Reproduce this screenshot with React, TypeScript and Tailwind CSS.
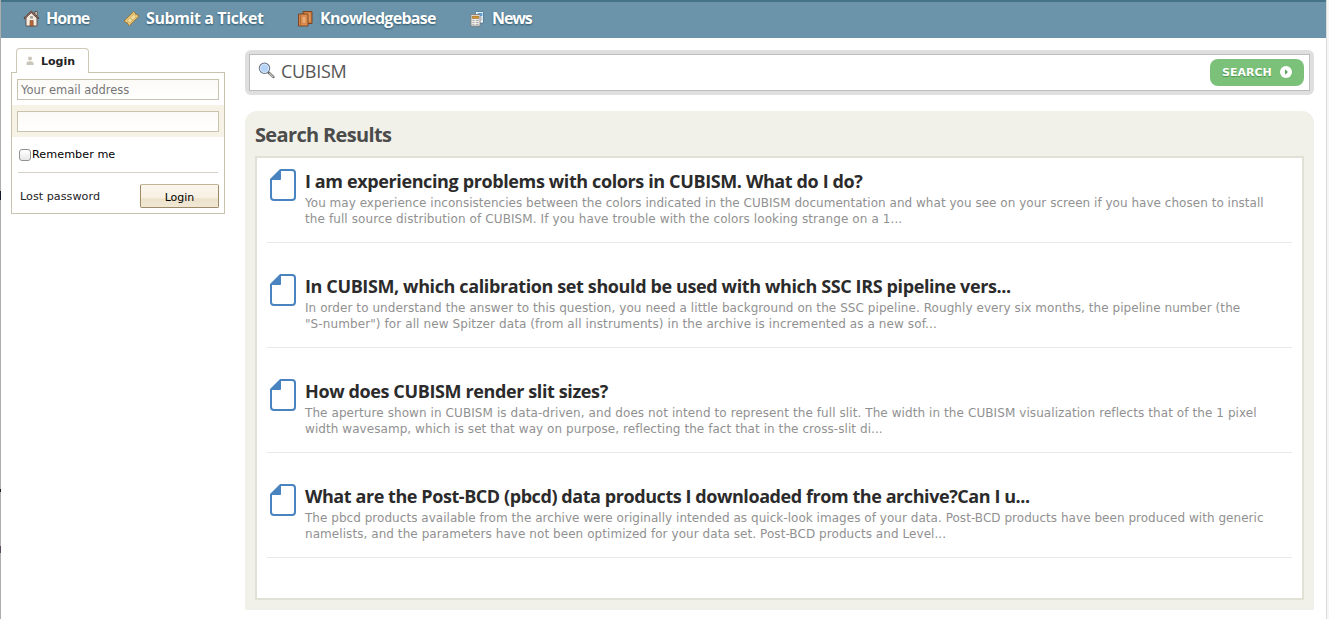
import type { ReactNode } from "react";

function HouseIcon() {
  return (
    <svg width="17" height="17" viewBox="0 0 17 17">
      <path d="M12 1.5h2.2v4H12z" fill="#e9dccb" stroke="#4a3328" strokeWidth=".7" />
      <path d="M3 7.5 8.2 2.6 14 8v8H3z" fill="#f6ecdf" stroke="#5b4a42" strokeWidth=".9" />
      <path d="M1 8.6 8.3 1.6l7.5 7" fill="none" stroke="#5b4036" strokeWidth="1.500" />
      <path d="M2 7.6 8.3 1.8l6.4 5.8" fill="none" stroke="#b58a75" strokeWidth=".6" />
      <path d="M7 10.500h3.200V16H7z" fill="#b9683a" stroke="#7d4a30" strokeWidth=".6" />
      <path d="M7.400 6.500h2.200v1.700H7.400z" fill="#9fb0bf" stroke="#8d7568" strokeWidth=".5" />
    </svg>
  );
}

function TicketIcon() {
  return (
    <svg width="17" height="17" viewBox="0 0 17 17">
      <path d="m1 11 9.700-9.500 1.700 1.500q-.3 1.500 1.400 1.500L16.200 6l-9.700 9.700-1.900-1.800q.5-1.500-1.500-1.200z" fill="#e5c579" stroke="#93702e" strokeWidth=".9" />
      <path d="m4.500 10.500 6.300-6 2.300 2.300-6.200 6z" fill="#f4dc9d" stroke="#c9a65c" strokeWidth=".6" />
      <path d="m7.800 8.400 2 2" stroke="#b38d42" strokeWidth=".8" />
    </svg>
  );
}

function BooksIcon() {
  return (
    <svg width="17" height="17" viewBox="0 0 17 17">
      <path d="M6 1.500h9v12H6z" fill="#cf7b3d" stroke="#74401f" strokeWidth=".9" />
      <path d="M8 3h5.500v8.500H8z" fill="#df985a" />
      <path d="M1.500 4h9.500v12H1.500z" fill="#dd8d4d" stroke="#74401f" strokeWidth=".9" />
      <path d="M3.300 4.500v11" stroke="#9c5828" strokeWidth=".8" />
      <path d="M5 6.300h4v7H5z" fill="#ebab74" stroke="#c9793f" strokeWidth=".6" />
    </svg>
  );
}

function NewsIcon() {
  return (
    <svg width="17" height="17" viewBox="0 0 17 17">
      <path d="M6.500 1.500h8v11.500h-8z" fill="#fff" stroke="#557b98" strokeWidth=".9" />
      <path d="M8.500 2.800h5v3.500h-5z" fill="#5ba4da" />
      <path d="M11.500 8h2.200M11.500 10h2.200" stroke="#8d9ba5" strokeWidth=".8" />
      <path d="M2 4.500h9v11.500H2z" fill="#fbfaf7" stroke="#7f7f7c" strokeWidth=".9" />
      <path d="M3.300 6h6.400v2.500H3.300z" fill="#d9962f" stroke="#775326" strokeWidth=".5" />
      <path d="M3.300 10.300h2.400m1 0h3m-6.400 2h2.400m1 0h3m-6.400 2h2.400m1 0h3" stroke="#888" strokeWidth=".8" />
    </svg>
  );
}

function MagnifierIcon() {
  return (
    <svg width="17" height="17" viewBox="0 0 17 17">
      <path d="m10.500 10.500 4.800 4.400" stroke="#6f6a66" strokeWidth="2.600" strokeLinecap="round" />
      <path d="m11.500 11.500 3.500 3.200" stroke="#c9c6c2" strokeWidth="1.200" strokeLinecap="round" />
      <circle cx="6.500" cy="6.300" r="5.200" fill="#b5d4f7" stroke="#6d7687" strokeWidth="1.100" />
      <circle cx="6.500" cy="6.300" r="4.200" fill="none" stroke="#e2effd" strokeWidth=".8" />
    </svg>
  );
}

function DocumentIcon() {
  return (
    <svg width="26" height="32" viewBox="0 0 26 32" className="shrink-0">
      <path d="M10.500 1H22q3 0 3 3v24q0 3-3 3H4q-3 0-3-3V10.500z" fill="#fff" stroke="#4a84c0" strokeWidth="2" />
      <path d="M10.500 1 1 10.500H10.500z" fill="#4a84c0" stroke="#4a84c0" />
    </svg>
  );
}

function NavItem({ icon, label, className }: { icon: ReactNode; label: string; className: string }) {
  return (
    <a className={`flex items-center gap-[6px] whitespace-nowrap font-['Open_Sans',sans-serif] text-[16px] leading-5 font-bold text-white [text-shadow:0_1px_2px_#2d5265] ${className}`}>
      {icon}
      <span>{label}</span>
    </a>
  );
}

const results = [
  {
    title: "I am experiencing problems with colors in CUBISM. What do I do?",
    track: "tracking-[-0.38px]",
    lines: [
      ["tracking-[0.027px]", "You may experience inconsistencies between the colors indicated in the CUBISM documentation and what you see on your screen if you have chosen to install"],
      ["tracking-[0.1px]", "the full source distribution of CUBISM. If you have trouble with the colors looking strange on a 1..."],
    ],
  },
  {
    title: "In CUBISM, which calibration set should be used with which SSC IRS pipeline vers...",
    track: "tracking-[-0.38px]",
    lines: [
      ["tracking-[0.066px]", "In order to understand the answer to this question, you need a little background on the SSC pipeline. Roughly every six months, the pipeline number (the"],
      ["tracking-[0.1px]", "\"S-number\") for all new Spitzer data (from all instruments) in the archive is incremented as a new sof..."],
    ],
  },
  {
    title: "How does CUBISM render slit sizes?",
    track: "tracking-[-0.38px]",
    lines: [
      ["tracking-[0.082px]", "The aperture shown in CUBISM is data-driven, and does not intend to represent the full slit. The width in the CUBISM visualization reflects that of the 1 pixel"],
      ["tracking-[0.064px]", "width wavesamp, which is set that way on purpose, reflecting the fact that in the cross-slit di..."],
    ],
  },
  {
    title: "What are the Post-BCD (pbcd) data products I downloaded from the archive?Can I u...",
    track: "tracking-[-0.43px]",
    lines: [
      ["tracking-[0.036px]", "The pbcd products available from the archive were originally intended as quick-look images of your data. Post-BCD products have been produced with generic"],
      ["tracking-[0.063px]", "namelists, and the parameters have not been optimized for your data set. Post-BCD products and Level..."],
    ],
  },
];

function LoginPanel() {
  return (
    <aside className="ml-[10px] w-[214px] shrink-0 pt-[10px] text-[11.2px] text-black">
      <div className="relative z-10 ml-[5px] flex h-[25px] w-[73px] items-center rounded-t-[4px] border border-b-0 border-[#cdc9b6] bg-white pl-[9px]">
        <svg width="8" height="10" viewBox="0 0 8 10" fill="#c9c5b8">
          <circle cx="4" cy="2.500" r="2" />
          <path d="M.5 9V7.500Q.5 5.300 4 5.300t3.500 2.200V9z" />
        </svg>
        <span className="ml-[7px] pt-[2px] text-[11px] font-bold text-[#222]">Login</span>
      </div>
      <div className="-mt-px h-[142px] border border-[#c8c3ae] bg-white">
        <div className="h-8 px-[5px] pt-[6px]">
          <div className="h-[21px] border border-[#c8c3ae] bg-linear-to-b from-[#fcfaf6] to-white pl-[3px] text-[11.5px] leading-[20px] tracking-[-0.03px] text-[#777]">Your email address</div>
        </div>
        <div className="h-8 bg-[#f6f3e6] px-[5px] pt-[6px]">
          <div className="h-[21px] border border-[#c8c3ae] bg-linear-to-b from-[#fcfaf6] to-white" />
        </div>
        <div className="mx-[6px] flex h-9 items-center border-b border-[#d5d2c4] pl-[1px]">
          <span className="h-3 w-3 rounded-[3px] border border-[#929292] bg-linear-to-b from-white to-[#e8e8e8]" />
          <span className="ml-[1px] pt-[2px] tracking-[0.05px]">Remember me</span>
        </div>
        <div className="flex items-start justify-between pt-[11px] pr-[5px] pl-[8px]">
          <span className="text-[#222] leading-[26px] tracking-[0.02px]">Lost password</span>
          <span className="flex h-6 w-[79px] items-center justify-center rounded-[2px] border border-[#9c8a68] border-t-[#c2b596] bg-[linear-gradient(#fbf6ed_0%,#f7f0e2_60%,#ede2cb_62%,#f1e8d5_100%)] pt-[4px] text-[11px]">Login</span>
        </div>
      </div>
    </aside>
  );
}

export default function App() {
  return (
    <div className="flex h-[619px] w-[1329px] overflow-hidden bg-white font-['DejaVu_Sans',Verdana,sans-serif]">
      <div className="flex w-px shrink-0 flex-col bg-[#adadad]">
        <i className="mt-[191px] h-[9px] bg-[#16192c]" />
        <i className="mt-[289px] h-[3px] bg-[#222]" />
        <i className="mt-[54px] h-[7px] bg-[#5c4a63]" />
      </div>
      <div className="w-[1325px] shrink-0">
        <nav className="flex h-[38px] items-center border-t-2 border-[#447389] bg-[#6b94ab] pb-[4px] pl-[22px]">
          <NavItem icon={<HouseIcon />} label="Home" className="w-[100px] tracking-[-1px]" />
          <NavItem icon={<TicketIcon />} label="Submit a Ticket" className="w-[174px] tracking-[-0.4px]" />
          <NavItem icon={<BooksIcon />} label="Knowledgebase" className="w-[172px] tracking-[-0.7px]" />
          <NavItem icon={<NewsIcon />} label="News" className="tracking-[-1.1px]" />
        </nav>
        <div className="flex">
          <LoginPanel />
          <main className="ml-5 w-[1069px] shrink-0 pt-3">
            <div className="rounded-[6px] bg-[#dfdfdf] p-[4px]">
              <div className="flex h-[37px] items-center border border-[#bdbdbd] bg-white pr-[5px] pl-[8px]">
                <div className="-mt-1"><MagnifierIcon /></div>
                <span className="-mt-[2px] ml-[6px] font-['Open_Sans',sans-serif] text-[18px] tracking-[-0.3px] text-[#555]">CUBISM</span>
                <span className="ml-auto flex h-[27px] w-[94px] items-center rounded-[8px] bg-[#7bc17a] pl-[12px] text-[11px] font-bold text-white [text-shadow:0_1px_1px_#4e8e4e]">
                  <span className="pt-[2px]">SEARCH</span>
                  <svg className="-mt-px ml-[8px]" width="12" height="12" viewBox="0 0 12 12">
                    <circle cx="6" cy="6" r="6" fill="#fff" />
                    <path d="m5 3.300 3 2.700-3 2.700z" fill="#5fa55f" />
                  </svg>
                </span>
              </div>
            </div>
            <section className="mt-4 h-[499px] rounded-t-[12px] bg-[#f1f1e9] px-[10px] pt-[9px]">
              <h1 className="h-9 font-['Open_Sans',sans-serif] text-[20px] leading-[30px] font-bold tracking-[-0.65px] text-[#4b4b4b]">Search Results</h1>
              <div className="h-[444px] border-2 border-[#e1e1d5] bg-white px-[10px]">
                {results.map((r) => (
                  <article key={r.title} className="mb-5 flex h-[85px] border-b border-[#e9e9e9] pt-[11px] pl-[3px]">
                    <DocumentIcon />
                    <div className="ml-[9px] whitespace-nowrap">
                      <h2 className={`h-[26px] font-['Open_Sans',sans-serif] text-[18px] leading-[25px] font-bold text-[#2b2b2b] ${r.track}`}>{r.title}</h2>
                      {r.lines.map(([track, text]) => (
                        <p key={text} className={`text-[12px] leading-4 text-[#919191] ${track}`}>{text}</p>
                      ))}
                    </div>
                  </article>
                ))}
              </div>
            </section>
          </main>
        </div>
      </div>
      <div className="w-[3px] border-l border-[#dcdcdc] bg-[#f5f5f5]" />
    </div>
  );
}
